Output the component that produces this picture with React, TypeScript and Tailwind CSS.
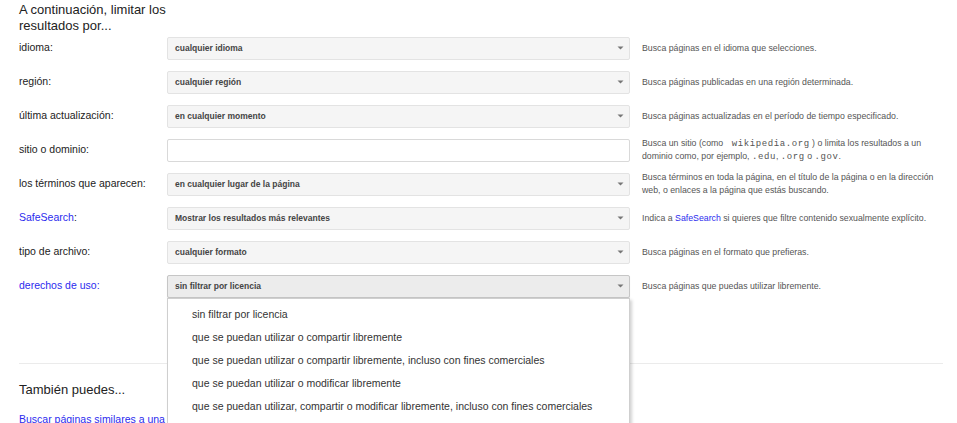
import React from "react"

type Row = {
  label: React.ReactNode
  value?: string
  input?: boolean
  active?: boolean
  desc: React.ReactNode
}

const Code = ({ children }: { children: React.ReactNode }) => (
  <span className="font-['Liberation_Mono',monospace] text-[9px] leading-none tracking-[0.6px]">{children}</span>
)

const rows: Row[] = [
  { label: "idioma:", value: "cualquier idioma", desc: "Busca páginas en el idioma que selecciones." },
  { label: "región:", value: "cualquier región", desc: "Busca páginas publicadas en una región determinada." },
  {
    label: "última actualización:",
    value: "en cualquier momento",
    desc: "Busca páginas actualizadas en el período de tiempo especificado.",
  },
  {
    label: "sitio o dominio:",
    input: true,
    desc: (
      <>
        Busca un sitio (como <Code>&nbsp;wikipedia.org</Code> ) o limita los resultados a un dominio como, por ejemplo,{" "}
        <Code>.edu</Code>, <Code>.org</Code> o <Code>.gov</Code>.
      </>
    ),
  },
  {
    label: "los términos que aparecen:",
    value: "en cualquier lugar de la página",
    desc: "Busca términos en toda la página, en el título de la página o en la dirección web, o enlaces a la página que estás buscando.",
  },
  {
    label: (
      <>
        <span className="text-[#2b2bee]">SafeSearch</span>:
      </>
    ),
    value: "Mostrar los resultados más relevantes",
    desc: (
      <>
        Indica a <span className="text-[#2b2bee]">SafeSearch</span> si quieres que filtre contenido sexualmente explícito.
      </>
    ),
  },
  { label: "tipo de archivo:", value: "cualquier formato", desc: "Busca páginas en el formato que prefieras." },
  {
    label: <span className="text-[#2b2bee]">derechos de uso:</span>,
    value: "sin filtrar por licencia",
    active: true,
    desc: "Busca páginas que puedas utilizar libremente.",
  },
]

const options = [
  "sin filtrar por licencia",
  "que se puedan utilizar o compartir libremente",
  "que se puedan utilizar o compartir libremente, incluso con fines comerciales",
  "que se puedan utilizar o modificar libremente",
  "que se puedan utilizar, compartir o modificar libremente, incluso con fines comerciales",
]

function Arrow() {
  return (
    <svg width="7" height="4" viewBox="0 0 7 4" className="shrink-0">
      <path d="M0.5 0.5 L6.5 0.5 L3.5 3.5 Z" fill="#777" />
    </svg>
  )
}

export default function App() {
  return (
    <div className="h-[423px] overflow-hidden bg-white font-['Liberation_Sans',Arial,sans-serif] text-[#222]">
      <div className="pl-[19px] pr-[14px]">
        <h2 className="h-[31px] w-[150px] pt-[2px] text-[13px] leading-[16px] text-[#222]">
          A continuación, limitar los resultados por...
        </h2>

        <div className="flex flex-col">
          {rows.map((row, i) => (
            <div key={i} className="flex h-[34px] items-center">
              <div className="w-[148px] shrink-0 text-[10.5px] text-[#222]">{row.label}</div>
              <div className="relative w-[463px] shrink-0">
                {row.input ? (
                  <div className="h-[23px] rounded-[2px] border border-[#d9d9d9] bg-white" />
                ) : (
                  <div
                    className={
                      row.active
                        ? "flex h-[23px] items-center justify-between rounded-[2px] border border-[#c6c6c6] bg-[#ececec] pl-[7px] pr-[5px] shadow-[0_1px_1px_rgba(0,0,0,0.1)]"
                        : "flex h-[23px] items-center justify-between rounded-[2px] border border-[#e3e3e3] bg-[#f5f5f5] pl-[7px] pr-[5px]"
                    }
                  >
                    <span className="text-[8.5px] font-bold text-[#444]">{row.value}</span>
                    <Arrow />
                  </div>
                )}
                {row.active && (
                  <div className="absolute left-0 top-full z-10 w-full border border-[#cfcfcf] bg-white pb-[6px] pt-[5px] shadow-[2px_2px_3px_rgba(0,0,0,0.18)]">
                    {options.map((o) => (
                      <div key={o} className="flex h-[23px] items-center pl-[24px] text-[10.5px] text-[#333]">
                        {o}
                      </div>
                    ))}
                  </div>
                )}
              </div>
              <div className="ml-[12px] w-[296px] text-[8.75px] leading-[13px] text-[#555]">{row.desc}</div>
            </div>
          ))}
        </div>

        <div className="mt-[60px] border-t border-[#ebebeb]" />
        <h3 className="mt-[18px] text-[13px] leading-[16px] text-[#222]">También puedes...</h3>
        <a className="mt-[14px] block text-[10.5px] text-[#2b2bee] underline">Buscar páginas similares a una página web</a>
      </div>
    </div>
  )
}
